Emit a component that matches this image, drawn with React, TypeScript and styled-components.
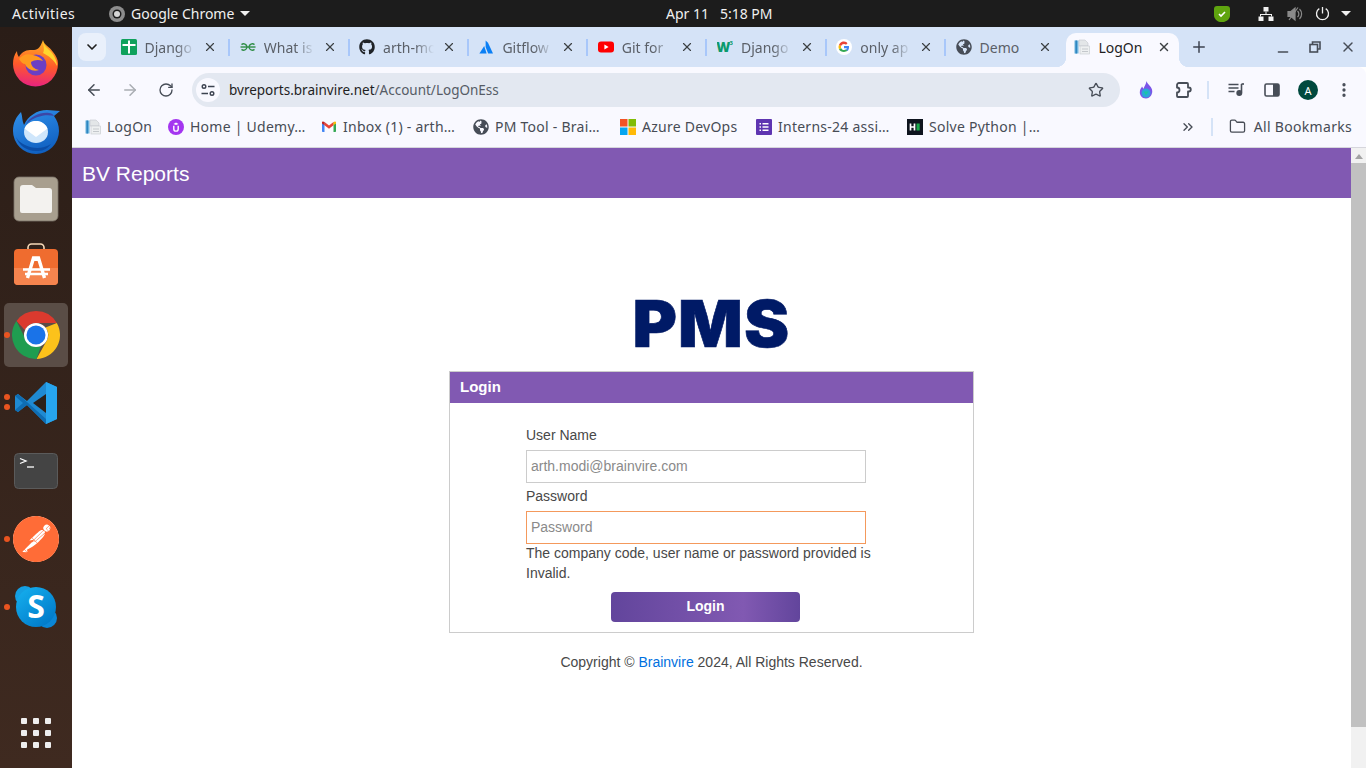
import React from 'react';
import styled, { createGlobalStyle } from 'styled-components';
import {
  ArrowLeft,
  ArrowRight,
  ChevronDown,
  ChevronsRight,
  EllipsisVertical,
  Folder,
  Minus,
  Plus,
  RotateCw,
  Star,
  X,
} from 'lucide-react';
import { FaGithub, FaGlobeAmericas } from 'react-icons/fa';
import { SiPostman } from 'react-icons/si';

const COLORS = {
  purple: '#8159b2',
  tabStrip: '#d5e3f7',
  toolbar: '#f9f9ff',
  omnibox: '#e3e8f1',
  icon: '#474d57',
  pageText: '#484848',
};

const GlobalStyle = createGlobalStyle`
  html, body {
    margin: 0;
    padding: 0;
    overflow: hidden;
    background: #fff;
  }
  * {
    box-sizing: border-box;
  }
`;

const Screen = styled.div`
  width: 1366px;
  height: 768px;
  display: flex;
  flex-direction: column;
  overflow: hidden;
  font-family: 'Noto Sans', sans-serif;
`;

/* gnome top bar */
const TopBar = styled.div`
  height: 27px;
  flex: none;
  display: flex;
  align-items: center;
  background: #1c1c1c;
  color: #f0f0f0;
  font-size: 14px;
  padding-left: 12px;
`;

const AppMenu = styled.div`
  width: 557px;
  margin-left: 34px;
  display: flex;
  align-items: center;
  gap: 6px;
`;

const Activities = styled.span`
  width: 63px;
  letter-spacing: 0.5px;
`;

const Clock = styled.span`
  white-space: pre;
`;

const Tray = styled.div`
  margin-left: auto;
  display: flex;
  align-items: center;
  height: 100%;
`;

const TraySlot = styled.div<{ $width: number }>`
  width: ${(p) => p.$width}px;
  display: flex;
  justify-content: center;
  align-items: center;
`;

const Caret = styled.span`
  width: 0;
  height: 0;
  border-left: 5px solid transparent;
  border-right: 5px solid transparent;
  border-top: 5px solid #f0f0f0;
`;

const Desktop = styled.div`
  flex: 1;
  display: flex;
  min-height: 0;
`;

/* launcher on the left */
const Dock = styled.nav`
  width: 72px;
  flex: none;
  display: flex;
  flex-direction: column;
  align-items: center;
  gap: 4px;
  padding: 4px 0 20px;
  background: linear-gradient(#2a1d17, #3f2a20);
`;

const DockItem = styled.div<{ $active?: boolean }>`
  position: relative;
  width: 64px;
  height: 64px;
  flex: none;
  display: flex;
  align-items: center;
  justify-content: center;
  border-radius: 5px;
  background: ${(p) => (p.$active ? '#5a4d46' : 'transparent')};
`;

const RunDot = styled.span<{ $top: number }>`
  position: absolute;
  left: 0;
  top: ${(p) => p.$top}px;
  width: 6px;
  height: 6px;
  border-radius: 50%;
  background: #e95420;
`;

const AppGrid = styled.div`
  margin-top: auto;
  display: grid;
  grid-template-columns: repeat(3, 6px);
  gap: 6px;
`;

const AppGridDot = styled.span`
  width: 6px;
  height: 6px;
  border-radius: 1px;
  background: #eeeeee;
`;

const Browser = styled.div`
  flex: 1;
  min-width: 0;
  display: flex;
  flex-direction: column;
`;

const TabStrip = styled.div`
  height: 40px;
  flex: none;
  display: flex;
  align-items: flex-end;
  padding-left: 6px;
  background: ${COLORS.tabStrip};
`;

const TabSearch = styled.div`
  width: 28px;
  height: 28px;
  margin: 0 3px 6px 0;
  display: flex;
  align-items: center;
  justify-content: center;
  border-radius: 8px;
  background: #e9f0fb;
  color: #1f1f1f;
`;

const Tab = styled.div<{ $last?: boolean }>`
  position: relative;
  width: 119.3px;
  height: 34px;
  flex: none;
  display: flex;
  align-items: center;
  gap: 8px;
  padding: 0 11px 6px 11.5px;
  font-size: 14px;
  color: #5b6068;

  &::after {
    content: '';
    display: ${(p) => (p.$last ? 'none' : 'block')};
    position: absolute;
    right: -2px;
    top: 6px;
    width: 2px;
    height: 17px;
    background: #a8c7fa;
  }
`;

const ActiveTab = styled.div`
  position: relative;
  width: 113px;
  height: 34px;
  margin-left: 3px;
  flex: none;
  display: flex;
  align-items: center;
  gap: 8px;
  padding: 0 8px 6px;
  font-size: 14px;
  color: #1f1f1f;
  background: ${COLORS.toolbar};
  border-radius: 10px 10px 0 0;

  &::before,
  &::after {
    content: '';
    position: absolute;
    bottom: 0;
    width: 10px;
    height: 10px;
  }
  &::before {
    left: -10px;
    background: radial-gradient(circle at 0 0, transparent 10px, ${COLORS.toolbar} 10.5px);
  }
  &::after {
    right: -10px;
    background: radial-gradient(circle at 100% 0, transparent 10px, ${COLORS.toolbar} 10.5px);
  }
`;

const TabTitle = styled.span<{ $fade?: boolean }>`
  flex: 1;
  min-width: 0;
  white-space: nowrap;
  ${(p) =>
    p.$fade
      ? 'mask-image: linear-gradient(90deg, #000 62%, transparent 100%);'
      : ''}
`;

const TabClose = styled(X)`
  flex: none;
  width: 14px;
  height: 14px;
  color: #3c4043;
`;

const NewTab = styled.div`
  width: 28px;
  height: 28px;
  margin: 0 0 6px 6px;
  display: flex;
  align-items: center;
  justify-content: center;
  color: #3c4350;
`;

const WindowControls = styled.div`
  margin-left: auto;
  display: flex;
  align-items: flex-start;
  height: 40px;
  padding: 12px 2px 0 0;
  color: #474d57;
`;

const WindowButton = styled.div<{ $low?: boolean }>`
  width: 32.5px;
  height: 16px;
  display: flex;
  align-items: ${(p) => (p.$low ? 'flex-end' : 'center')};
  justify-content: center;
  line-height: 0;
`;

const LowMinus = styled(Minus)`
  margin-bottom: -5px;
`;

const Toolbar = styled.div`
  height: 40px;
  flex: none;
  display: flex;
  align-items: center;
  padding: 6px 0 0 4px;
  background: ${COLORS.toolbar};
  border-radius: 8px 8px 0 0;
  color: ${COLORS.icon};
`;

const ToolSlot = styled.div<{ $width?: number; $muted?: boolean }>`
  width: ${(p) => p.$width ?? 36}px;
  height: 34px;
  flex: none;
  display: flex;
  align-items: center;
  justify-content: center;
  color: ${(p) => (p.$muted ? '#a9adb3' : COLORS.icon)};
`;

const Omnibox = styled.div`
  width: 928px;
  height: 34px;
  margin: 0 8px;
  display: flex;
  align-items: center;
  padding: 0 16px 0 4px;
  border-radius: 17px;
  background: ${COLORS.omnibox};
  font-size: 13.5px;
`;

const SiteInfo = styled.div`
  width: 24px;
  height: 24px;
  flex: none;
  margin-right: 9px;
  display: flex;
  align-items: center;
  justify-content: center;
  border-radius: 50%;
  background: #f9f9ff;
`;

const UrlHost = styled.span`
  color: #1f1f1f;
`;

const UrlPath = styled.span`
  color: #565c66;
`;

const UrlStar = styled(Star)`
  margin-left: auto;
  width: 16px;
  height: 16px;
  color: #474d57;
`;

const ToolDivider = styled.span`
  width: 2px;
  height: 18px;
  flex: none;
  background: #d5e3f7;
`;

const Avatar = styled.div`
  width: 20px;
  height: 20px;
  display: flex;
  align-items: center;
  justify-content: center;
  border-radius: 50%;
  background: #00493e;
  color: #fff;
  font-size: 11px;
`;

const BookmarkBar = styled.div`
  height: 41px;
  flex: none;
  display: flex;
  align-items: center;
  padding: 0 0 1px 13px;
  background: ${COLORS.toolbar};
  border-bottom: 1px solid #d6d6dc;
  font-size: 14px;
  letter-spacing: 0.25px;
  color: #474c55;
`;

const Bookmark = styled.div<{ $width: number }>`
  width: ${(p) => p.$width}px;
  flex: none;
  display: flex;
  align-items: center;
  gap: 6px;
  white-space: nowrap;
`;

const BookmarkTail = styled.div`
  margin-left: auto;
  display: flex;
  align-items: center;
  padding-right: 14px;
`;

const BookmarkDivider = styled(ToolDivider)`
  margin: 0 16px 0 15px;
`;

const AllBookmarks = styled.div`
  display: flex;
  align-items: center;
  gap: 8px;
  letter-spacing: 0.3px;
`;

const PageArea = styled.div`
  flex: 1;
  min-height: 0;
  display: flex;
`;

const Page = styled.main`
  flex: 1;
  min-width: 0;
  display: flex;
  flex-direction: column;
  align-items: center;
  background: #fff;
  font-family: 'Liberation Sans', Arial, sans-serif;
  font-size: 14px;
  color: ${COLORS.pageText};
`;

const SiteHeader = styled.header`
  align-self: stretch;
  height: 50px;
  flex: none;
  display: flex;
  align-items: center;
  padding: 1px 0 0 10px;
  background: ${COLORS.purple};
  color: #fff;
  font-size: 21px;
`;

const Logo = styled.div`
  margin-top: 88px;
  height: 85px;
  font-family: Inter, sans-serif;
  font-weight: 900;
  font-size: 64px;
  line-height: 76px;
  letter-spacing: 1px;
  color: #001a66;
  -webkit-text-stroke: 0.6px #001a66;
  transform: scaleX(1.06);
`;

const LoginCard = styled.section`
  width: 525px;
  border: 1px solid #ccc;
`;

const CardHeader = styled.h2`
  margin: 0;
  height: 31px;
  display: flex;
  align-items: center;
  padding: 0 0 2px 10px;
  background: ${COLORS.purple};
  color: #fff;
  font-size: 15px;
  font-weight: 700;
`;

const LoginForm = styled.form`
  width: 359px;
  margin-left: 76px;
  padding: 22px 0 10px;
  display: flex;
  flex-direction: column;
  line-height: 20px;
`;

const FieldLabel = styled.label<{ $first?: boolean }>`
  margin: ${(p) => (p.$first ? '0' : '3px')} 0 5px;
`;

const TextInput = styled.input<{ $invalid?: boolean }>`
  width: 340px;
  height: 33px;
  padding: 0 4px 2px;
  border: 1px solid ${(p) => (p.$invalid ? '#f4995c' : '#ccc')};
  outline: none;
  border-radius: 0;
  background: #fff;
  font-family: inherit;
  font-size: 14px;
  color: #444;

  &::placeholder {
    color: #8a8a8a;
    opacity: 1;
  }
`;

const ErrorText = styled.div`
  margin-top: -1px;
`;

const SubmitButton = styled.button`
  width: 189px;
  height: 30px;
  margin: 9px auto 0;
  padding: 0 0 2px;
  border: 0;
  border-radius: 4px;
  background: linear-gradient(90deg, #62459c, #8159b2 70%, #62459c);
  color: #fff;
  font-family: inherit;
  font-size: 14px;
  font-weight: 700;
`;

const Copyright = styled.p`
  margin: 19px 0 0;
  line-height: 20px;
`;

const BrandLink = styled.a`
  color: #0070e0;
  text-decoration: none;
`;

const Scrollbar = styled.div`
  width: 15px;
  flex: none;
  display: flex;
  flex-direction: column;
  align-items: center;
  background: #f1f1f1;
`;

const ScrollArrow = styled.span`
  width: 0;
  height: 0;
  margin: 6px 0 4px;
  border-left: 4px solid transparent;
  border-right: 4px solid transparent;
  border-bottom: 5px solid #a3a3a3;
`;

const ScrollThumb = styled.div`
  width: 100%;
  height: 564px;
  background: #c1c1c1;
`;

const SitesIcon = () => (
  <svg width="16" height="16" viewBox="0 0 16 16" fill="none" stroke="#3c4350" strokeWidth="1.4">
    <circle cx="4" cy="4.5" r="1.8" />
    <path d="M8 4.500h6.500M1.500 11.500H8" />
    <circle cx="12" cy="11.500" r="1.8" />
  </svg>
);

const SheetsFavicon = () => (
  <svg width="16" height="16" viewBox="0 0 16 16">
    <rect width="16" height="16" rx="1.5" fill="#0fa15c" />
    <path d="M7 1.500h2v3.500h5.500v2H9v7.500H7V7H1.500V5H7z" fill="#fff" />
  </svg>
);

const GfgFavicon = () => (
  <svg width="16" height="16" viewBox="0 0 16 16" fill="none" stroke="#2f8d46" strokeWidth="1.4">
    <path d="M.5 8h15" />
    <path d="M1.500 5.600A3.400 3.400 0 0 1 7 8a3.400 3.400 0 0 1-5.500 2.400" />
    <path d="M14.500 5.600A3.400 3.400 0 0 0 9 8a3.400 3.400 0 0 0 5.500 2.400" />
  </svg>
);

const AzureFavicon = () => (
  <svg width="16" height="16" viewBox="0 0 16 16" fill="#0a7ff5">
    <path d="M7.600 1.500 10 3.800 15 14.500H10.200L7.600 8z" />
    <path d="M6.200 7 8.600 14.500H1.400z" />
  </svg>
);

const YoutubeFavicon = () => (
  <svg width="16" height="16" viewBox="0 0 16 16">
    <rect y="2.500" width="16" height="11" rx="3" fill="#f00" />
    <path d="M6.400 5.600 10.600 8l-4.200 2.400z" fill="#fff" />
  </svg>
);

const W3Favicon = () => (
  <svg width="16" height="16" viewBox="0 0 16 16">
    <text x="-0.8" y="13" fontFamily="Noto Sans" fontWeight="900" fontSize="13.500" fill="#0b9a6d">W</text>
    <text x="12.500" y="6" fontFamily="Noto Sans" fontWeight="700" fontSize="6" fill="#0b9a6d">3</text>
  </svg>
);

const GoogleFavicon = () => (
  <svg width="16" height="16" viewBox="0 0 16 16">
    <circle cx="8" cy="8" r="8" fill="#fff" />
    <path d="M13 8.200c0-.4 0-.8-.1-1.100H8v2.100h2.800c-.1.700-.5 1.200-1 1.600l1.600 1.300c1-.9 1.600-2.200 1.600-3.900z" fill="#4285f4" />
    <path d="M8 13c1.400 0 2.500-.5 3.400-1.200l-1.600-1.300c-.5.300-1.100.5-1.800.5-1.300 0-2.500-.9-2.900-2.100L3 10.200C3.800 11.900 5.800 13 8 13z" fill="#34a853" />
    <path d="M5.100 8.900A3 3 0 0 1 5.100 7.100L3 5.800a5 5 0 0 0 0 4.400z" fill="#fbbc05" />
    <path d="M8 5c.8 0 1.500.3 2 .8l1.500-1.500A5 5 0 0 0 3 5.800l2.100 1.300C5.500 5.900 6.700 5 8 5z" fill="#ea4335" />
  </svg>
);

const DocFavicon = () => (
  <svg width="16" height="16" viewBox="0 0 16 16">
    <rect x="0.500" y="1.500" width="4" height="13" fill="#6db3dc" />
    <rect x="1.500" y="1.500" width="1.500" height="13" fill="#2e86c1" />
    <path d="M5 1h6l3 3v3H5z" fill="#e3e6e8" stroke="#c4c8cc" strokeWidth="0.600" />
    <rect x="6" y="7" width="9.500" height="8" fill="#eef0f1" stroke="#c4c8cc" strokeWidth="0.600" />
    <path d="M8 10h6M8 12.500h6" stroke="#c4c8cc" />
  </svg>
);

const UdemyFavicon = () => (
  <svg width="16" height="16" viewBox="0 0 16 16" fill="none">
    <circle cx="8" cy="8" r="8" fill="#a435f0" />
    <path d="M5.800 6.800v3.100a2.200 2.200 0 0 0 4.400 0V6.800" stroke="#fff" strokeWidth="1.400" />
    <path d="M5.500 5 8 3.500 10.500 5 8 6z" fill="#fff" />
  </svg>
);

const GmailFavicon = () => (
  <svg width="16" height="16" viewBox="0 0 16 16">
    <path d="M1 4.500 3.500 3v10H1.800A.8.8 0 0 1 1 12.200z" fill="#4285f4" />
    <path d="M15 4.500 12.500 3v10h1.700a.8.8 0 0 0 .8-.8z" fill="#34a853" />
    <path d="M3.500 3 8 6.500 12.500 3v3.300L8 9.700 3.500 6.300z" fill="#ea4335" />
    <path d="M12.500 3 14 2.600a.7.7 0 0 1 1 .7v1.200l-2.500 1.800z" fill="#fbbc05" />
    <path d="M3.500 3 2 2.600a.7.7 0 0 0-1 .7v1.200l2.500 1.800z" fill="#c5221f" />
  </svg>
);

const MicrosoftFavicon = () => (
  <svg width="16" height="16" viewBox="0 0 16 16">
    <rect width="7.500" height="7.500" fill="#f35325" />
    <rect x="8.500" width="7.500" height="7.500" fill="#81bc06" />
    <rect y="8.500" width="7.500" height="7.500" fill="#05a6f0" />
    <rect x="8.500" y="8.500" width="7.500" height="7.500" fill="#ffba08" />
  </svg>
);

const FormsFavicon = () => (
  <svg width="16" height="16" viewBox="0 0 16 16">
    <rect width="16" height="16" rx="1" fill="#5e35b1" />
    <path d="M6.500 4.800h6M6.500 8h6M6.500 11.200h6M3.500 4.800h1.500M3.500 8h1.500M3.500 11.200h1.500" stroke="#fff" strokeWidth="1.500" />
  </svg>
);

const HackerRankFavicon = () => (
  <svg width="16" height="16" viewBox="0 0 16 16">
    <rect width="16" height="16" fill="#0e141e" />
    <path d="M3.500 4.500v7M7.500 4.500v7M3.500 8h4" stroke="#fff" strokeWidth="1.700" />
    <rect x="9.500" y="4.500" width="3.200" height="7" fill="#1ba94c" />
  </svg>
);

const FlameIcon = () => (
  <svg width="18" height="20" viewBox="0 0 18 20">
    <path d="M9.500 1c.5 3 4.500 5 5.500 8.500 1.200 4.500-2 9-6 9s-7-3.500-6-8c.4-1.700 1.500-2.700 2-4 .7 1 1 1.700 1.500 2.200C7.500 6 9.200 4 9.500 1z" fill="#7b55e8" />
    <circle cx="9" cy="13" r="4.500" fill="#2aa7d8" />
    <path d="M6.500 11.500h5L9 15.500z" fill="#19c6a5" />
  </svg>
);

const ExtensionIcon = () => (
  <svg width="18" height="18" viewBox="0 0 18 18" fill="none" stroke="#474d57" strokeWidth="1.800" strokeLinejoin="round">
    <path d="M5 2h8a1 1 0 0 1 1 1v3.500h.8a2 2 0 0 1 0 4H14V15a1 1 0 0 1-1 1H4a1 1 0 0 1-1-1v-3.500a2.500 2.500 0 0 0 0-5V4a2 2 0 0 1 2-2z" />
  </svg>
);

const QueueIcon = () => (
  <svg width="18" height="18" viewBox="0 0 18 18" fill="none" stroke="#474d57" strokeWidth="1.600">
    <path d="M1.500 3.500h10M1.500 7h10M1.500 10.500h6" />
    <path d="M14.500 3v8.500" />
    <path d="M14.500 3h2.500" />
    <circle cx="12.300" cy="12" r="2.200" fill="#474d57" />
  </svg>
);

const SidePanelIcon = () => (
  <svg width="16" height="16" viewBox="0 0 16 16">
    <rect x="1" y="2" width="14" height="12" rx="1.500" fill="none" stroke="#474d57" strokeWidth="1.600" />
    <rect x="9" y="2" width="6" height="12" fill="#474d57" />
  </svg>
);

const RestoreIcon = () => (
  <svg width="12" height="12" viewBox="0 0 12 12" fill="none" stroke="#474d57" strokeWidth="1.600">
    <path d="M3.500 3V1h7.500v7H8.500" />
    <rect x="1" y="3.500" width="7.500" height="7.500" />
  </svg>
);

const ChromeMono = () => (
  <svg width="16" height="16" viewBox="0 0 16 16">
    <circle cx="8" cy="8" r="8" fill="#8d8d8d" />
    <circle cx="8" cy="8" r="4.500" fill="#1c1c1c" />
    <circle cx="8" cy="8" r="3" fill="#d5d5d5" />
  </svg>
);

const ShieldTray = () => (
  <svg width="16" height="16" viewBox="0 0 16 16">
    <path d="M3 0h10a3 3 0 0 1 3 3v6c0 4-3 6-6 7H6c-3-.5-6-3-6-7V3a3 3 0 0 1 3-3z" fill="#5fa40f" />
    <path d="M5 8l2 2 4-4" fill="none" stroke="#fff" strokeWidth="1.600" />
  </svg>
);

const NetworkTray = () => (
  <svg width="16" height="14" viewBox="0 0 16 14" fill="#f0f0f0">
    <rect x="5.500" y="0" width="5" height="4.500" />
    <rect x="0.500" y="9.500" width="5" height="4.500" />
    <rect x="10.500" y="9.500" width="5" height="4.500" />
    <path d="M7.500 4.500h1V7h5.500v2.500h-1V8H3v1.500H2V7h5.500z" />
  </svg>
);

const MuteTray = () => (
  <svg width="16" height="16" viewBox="0 0 16 16" fill="none" stroke="#8a8a8a" strokeWidth="1.200">
    <path d="M1 5.500h3L8 2v12l-4-3.500H1z" fill="#8a8a8a" />
    <path d="M10.500 5a4 4 0 0 1 0 6M12.500 3a7 7 0 0 1 0 10" />
    <path d="M2 14 11 1.500" />
  </svg>
);

const PowerTray = () => (
  <svg width="15" height="15" viewBox="0 0 15 15" fill="none" stroke="#f0f0f0" strokeWidth="1.300">
    <path d="M7.500 1v6.500" />
    <path d="M4.300 2.600a6 6 0 1 0 6.400 0" />
  </svg>
);

const FirefoxIcon = () => (
  <svg width="46" height="48" viewBox="0 0 46 48">
    <defs>
      <linearGradient id="ffBody" x1="0.6" y1="0" x2="0.5" y2="1">
        <stop offset="0" stopColor="#ffb224" />
        <stop offset="0.55" stopColor="#ff5a2a" />
        <stop offset="1" stopColor="#e8237f" />
      </linearGradient>
    </defs>
    <path d="M30 1c1 5 6 6 10 12 3 4 5 7 5 12a22.500 22.500 0 0 1-45 0c0-5 1-9 4-13 0 3 1 5 2 6 2-4 6-7 11-7 6 0 9 1 13-10z" fill="url(#ffBody)" />
    <path d="M30 1c0 6 5 8 9 13 3 4 5 8 5 13-3-6-8-10-14-13 2-3 0-8 0-13z" fill="#ffd52e" />
    <circle cx="23" cy="26" r="10.500" fill="#6b3fc4" />
    <path d="M6 20c3-4 8-6 14-4 5 1 8 3 10 6-5-2-9-1-12 1 0 4 3 7 8 8-6 2-12-1-14-6-2 0-4-2-6-5z" fill="#ff9a1f" />
  </svg>
);

const ThunderbirdIcon = () => (
  <svg width="48" height="48" viewBox="0 0 48 48">
    <defs>
      <linearGradient id="tbBody" x1="0.2" y1="0" x2="0.6" y2="1">
        <stop offset="0" stopColor="#2f8ee8" />
        <stop offset="1" stopColor="#0f5fc0" />
      </linearGradient>
    </defs>
    <path d="M1 24C1 16 4 10 9 5c1.500 4 1 9 3 13 4-9 13-15 23-15l13 1-6 5c3 4 5 9 5 15a23 23 0 0 1-46 0z" fill="url(#tbBody)" />
    <path d="M14 17c5-8 14-12 23-11 2 0 4 1 5 3-8-2-19 0-28 8z" fill="#3c47a6" />
    <path d="M12 25c0-7 6-11 12-11s12 4 12 11-6 11-12 11-12-4-12-11z" fill="#cfe6fb" />
    <path d="M12.500 21.500 24 30l11.500-8.500C33 16.500 29 14 24 14s-9 2.500-11.500 7.500z" fill="#ffffff" />
    <path d="M4 30c3 9 12 15 22 14 6 0 10-3 13-7-8 5-18 5-26 1-4-2-7-4-9-8z" fill="#0b4da6" />
  </svg>
);

const FilesIcon = () => (
  <svg width="46" height="46" viewBox="0 0 46 46">
    <rect x="1" y="1" width="44" height="44" rx="5" fill="#a89f8f" stroke="#7c7569" strokeWidth="0.800" />
    <path d="M7 12a3 3 0 0 1 3-3h9l4 3h13a3 3 0 0 1 3 3v20a2 2 0 0 1-2 2H9a2 2 0 0 1-2-2z" fill="#f3f2ef" />
  </svg>
);

const SoftwareIcon = () => (
  <svg width="46" height="48" viewBox="0 0 46 48" fill="none">
    <path d="M15 7V4.500a3.500 3.500 0 0 1 3.500-3.500h9A3.500 3.500 0 0 1 31 4.500V7" stroke="#f6d9b8" strokeWidth="1.600" />
    <rect x="1" y="6" width="44" height="36" rx="4" fill="#ef6c2f" />
    <path d="M1 25h44v13a4 4 0 0 1-4 4H5a4 4 0 0 1-4-4z" fill="#f5844e" />
    <path d="M14.500 35 20.500 15h5l6 20" stroke="#fff" strokeWidth="3.400" />
    <path d="M10 26.500h27M12 31h23" stroke="#fff" strokeWidth="2.400" />
    <path d="M20.500 16h5" stroke="#fff" strokeWidth="4" />
  </svg>
);

const ChromeIcon = () => (
  <svg width="48" height="48" viewBox="0 0 48 48">
    <path d="M24 0a24 24 0 0 1 20.800 12H24a12 12 0 0 0-11 7.200L4.500 10A24 24 0 0 1 24 0z" fill="#db3a2e" />
    <path d="M44.800 12A24 24 0 0 1 24.500 48L34.500 30A12 12 0 0 0 33.500 16.500z" fill="#fcc21b" />
    <path d="M24.500 48A24 24 0 0 1 4.500 10L14.500 30A12 12 0 0 0 29 35z" fill="#1f9d50" />
    <circle cx="24" cy="24" r="12" fill="#fff" />
    <circle cx="24" cy="24" r="9.500" fill="#1a73e8" />
  </svg>
);

const VscodeIcon = () => (
  <svg width="44" height="44" viewBox="0 0 44 44">
    <path d="M32 1 13 20 4 13l-3 2v14l3 2 9-7 19 19 11-5V6z" fill="#1f8ad2" />
    <path d="M32 1l11 5v32l-11 5z" fill="#27a5ee" />
    <path d="M32 13 19 22l13 10z" fill="#2c2018" />
    <path d="M4 13l28 25v5L13 24l-9 7-3-2 8-7-8-7z" fill="#0f6db3" />
  </svg>
);

const TerminalIcon = () => (
  <svg width="44" height="36" viewBox="0 0 44 36" fill="none">
    <rect x="0.500" y="0.500" width="43" height="35" rx="4" fill="#444" stroke="#5b5b5b" />
    <path d="M6 5.500l6 2.500-6 2.500" stroke="#fff" strokeWidth="1.300" />
    <path d="M13 14h7" stroke="#fff" strokeWidth="1.300" />
  </svg>
);

const PostmanBadge = styled.div`
  width: 46px;
  height: 46px;
  display: flex;
  border-radius: 50%;
  background: radial-gradient(circle, #fff 70%, #ff6c37 71%);
`;

const PostmanIcon = () => (
  <PostmanBadge>
    <SiPostman size={46} color="#ff6c37" />
  </PostmanBadge>
);

const SkypeIcon = () => (
  <svg width="44" height="44" viewBox="0 0 44 44">
    <defs>
      <linearGradient id="skypeBody" x1="0" y1="0" x2="0.8" y2="1">
        <stop offset="0" stopColor="#16b2f0" />
        <stop offset="1" stopColor="#0078c8" />
      </linearGradient>
    </defs>
    <circle cx="11" cy="11" r="10" fill="#149fe2" />
    <circle cx="33" cy="33" r="10" fill="#0a86d6" />
    <circle cx="22" cy="22" r="20" fill="url(#skypeBody)" />
    <text x="22" y="33" textAnchor="middle" fontFamily="Noto Sans" fontWeight="700" fontSize="32" fill="#fff">S</text>
  </svg>
);

const tabs: { title: string; icon: React.ReactNode; fade?: boolean }[] = [
  { title: 'Django', icon: <SheetsFavicon />, fade: true },
  { title: 'What is', icon: <GfgFavicon />, fade: true },
  { title: 'arth-mo', icon: <FaGithub size={16} color="#1f2328" />, fade: true },
  { title: 'Gitflow', icon: <AzureFavicon />, fade: true },
  { title: 'Git for', icon: <YoutubeFavicon />, fade: true },
  { title: 'Django', icon: <W3Favicon />, fade: true },
  { title: 'only ap', icon: <GoogleFavicon />, fade: true },
  { title: 'Demo', icon: <FaGlobeAmericas size={16} color="#474d57" /> },
];

const bookmarks: { title: string; icon: React.ReactNode; width: number }[] = [
  { title: 'LogOn', icon: <DocFavicon />, width: 83 },
  { title: 'Home | Udemy…', icon: <UdemyFavicon />, width: 153 },
  { title: 'Inbox (1) - arth…', icon: <GmailFavicon />, width: 152 },
  { title: 'PM Tool - Brai…', icon: <FaGlobeAmericas size={16} color="#474d57" />, width: 147 },
  { title: 'Azure DevOps', icon: <MicrosoftFavicon />, width: 136 },
  { title: 'Interns-24 assi…', icon: <FormsFavicon />, width: 151 },
  { title: 'Solve Python |…', icon: <HackerRankFavicon />, width: 140 },
];

const dockApps: { key: string; icon: React.ReactNode; active?: boolean; dots?: number[] }[] = [
  { key: 'firefox', icon: <FirefoxIcon /> },
  { key: 'thunderbird', icon: <ThunderbirdIcon /> },
  { key: 'files', icon: <FilesIcon /> },
  { key: 'software', icon: <SoftwareIcon /> },
  { key: 'chrome', icon: <ChromeIcon />, active: true, dots: [29] },
  { key: 'vscode', icon: <VscodeIcon />, dots: [23, 33] },
  { key: 'terminal', icon: <TerminalIcon /> },
  { key: 'postman', icon: <PostmanIcon />, dots: [29] },
  { key: 'skype', icon: <SkypeIcon />, dots: [29] },
];

const App = () => {
  return (
    <Screen>
      <GlobalStyle />
      <TopBar>
        <Activities>Activities</Activities>
        <AppMenu>
          <ChromeMono />
          <span>Google Chrome</span>
          <Caret />
        </AppMenu>
        <Clock>Apr 11   5:18 PM</Clock>
        <Tray>
          <TraySlot $width={32}><ShieldTray /></TraySlot>
          <TraySlot $width={12} />
          <TraySlot $width={32}><NetworkTray /></TraySlot>
          <TraySlot $width={26}><MuteTray /></TraySlot>
          <TraySlot $width={28}><PowerTray /></TraySlot>
          <TraySlot $width={20}><Caret /></TraySlot>
          <TraySlot $width={10} />
        </Tray>
      </TopBar>
      <Desktop>
        <Dock>
          {dockApps.map((app) => (
            <DockItem key={app.key} $active={app.active}>
              {app.dots?.map((top) => <RunDot key={top} $top={top} />)}
              {app.icon}
            </DockItem>
          ))}
          <AppGrid>
            {Array.from({ length: 9 }, (_, i) => <AppGridDot key={i} />)}
          </AppGrid>
        </Dock>
        <Browser>
          <TabStrip>
            <TabSearch><ChevronDown size={16} strokeWidth={2.5} /></TabSearch>
            {tabs.map((tab, i) => (
              <Tab key={i} $last={i === tabs.length - 1}>
                {tab.icon}
                <TabTitle $fade={tab.fade}>{tab.title}</TabTitle>
                <TabClose strokeWidth={2} />
              </Tab>
            ))}
            <ActiveTab>
              <DocFavicon />
              <TabTitle>LogOn</TabTitle>
              <TabClose strokeWidth={2.4} />
            </ActiveTab>
            <NewTab><Plus size={18} strokeWidth={2} /></NewTab>
            <WindowControls>
              <WindowButton $low><LowMinus size={16} strokeWidth={2} /></WindowButton>
              <WindowButton><RestoreIcon /></WindowButton>
              <WindowButton><X size={16} strokeWidth={2.2} /></WindowButton>
            </WindowControls>
          </TabStrip>
          <Toolbar>
            <ToolSlot><ArrowLeft size={18} strokeWidth={2} /></ToolSlot>
            <ToolSlot $muted><ArrowRight size={18} strokeWidth={2} /></ToolSlot>
            <ToolSlot><RotateCw size={16} strokeWidth={2} /></ToolSlot>
            <Omnibox>
              <SiteInfo><SitesIcon /></SiteInfo>
              <UrlHost>bvreports.brainvire.net</UrlHost>
              <UrlPath>/Account/LogOnEss</UrlPath>
              <UrlStar strokeWidth={2} />
            </Omnibox>
            <ToolSlot $width={36}><FlameIcon /></ToolSlot>
            <ToolSlot $width={38}><ExtensionIcon /></ToolSlot>
            <ToolSlot $width={12}><ToolDivider /></ToolSlot>
            <ToolSlot $width={44}><QueueIcon /></ToolSlot>
            <ToolSlot $width={28}><SidePanelIcon /></ToolSlot>
            <ToolSlot $width={44}><Avatar>A</Avatar></ToolSlot>
            <ToolSlot $width={28}><EllipsisVertical size={18} strokeWidth={2.4} /></ToolSlot>
          </Toolbar>
          <BookmarkBar>
            {bookmarks.map((bm) => (
              <Bookmark key={bm.title} $width={bm.width}>
                {bm.icon}
                <span>{bm.title}</span>
              </Bookmark>
            ))}
            <BookmarkTail>
              <ChevronsRight size={16} strokeWidth={2} />
              <BookmarkDivider />
              <AllBookmarks>
                <Folder size={17} strokeWidth={1.8} />
                <span>All Bookmarks</span>
              </AllBookmarks>
            </BookmarkTail>
          </BookmarkBar>
          <PageArea>
            <Page>
              <SiteHeader>BV Reports</SiteHeader>
              <Logo>PMS</Logo>
              <LoginCard>
                <CardHeader>Login</CardHeader>
                <LoginForm onSubmit={(e) => e.preventDefault()}>
                  <FieldLabel $first>User Name</FieldLabel>
                  <TextInput placeholder="arth.modi@brainvire.com" />
                  <FieldLabel>Password</FieldLabel>
                  <TextInput type="password" placeholder="Password" $invalid />
                  <ErrorText>The company code, user name or password provided is Invalid.</ErrorText>
                  <SubmitButton type="submit">Login</SubmitButton>
                </LoginForm>
              </LoginCard>
              <Copyright>
                Copyright © <BrandLink href="#">Brainvire</BrandLink> 2024, All Rights Reserved.
              </Copyright>
            </Page>
            <Scrollbar>
              <ScrollArrow />
              <ScrollThumb />
            </Scrollbar>
          </PageArea>
        </Browser>
      </Desktop>
    </Screen>
  );
};

export default App;
